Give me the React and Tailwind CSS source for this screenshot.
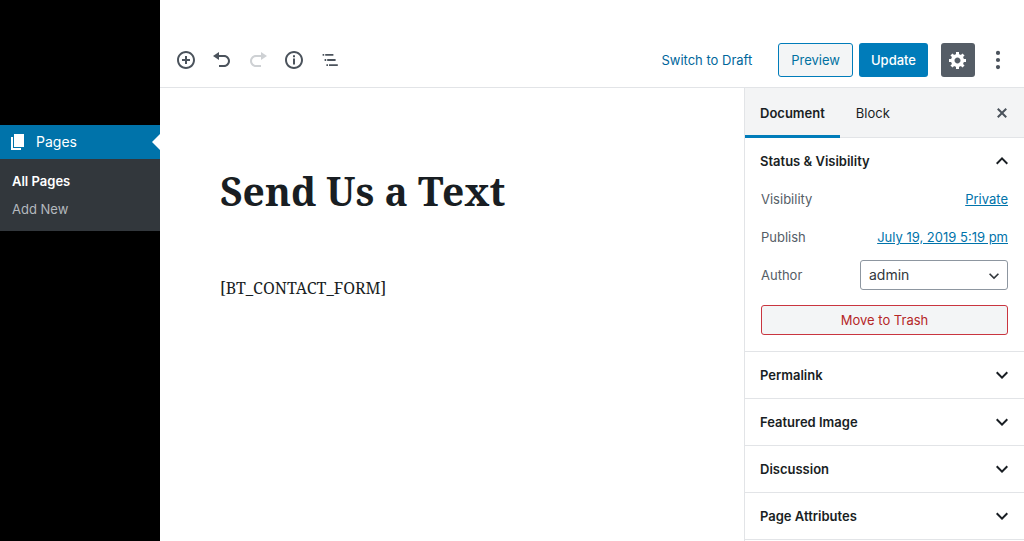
import React, { useState } from "react";

const PATHS = {
  insert:
    "M10 1c-5 0-9 4-9 9s4 9 9 9 9-4 9-9-4-9-9-9zm0 16c-3.9 0-7-3.1-7-7s3.1-7 7-7 7 3.1 7 7-3.1 7-7 7zm1-11H9v3H6v2h3v3h2v-3h3V9h-3V6z",
  undo: "M12 5H7V2L1 6l6 4V7h5c2.2 0 4 1.8 4 4s-1.8 4-4 4H7v2h5c3.3 0 6-2.7 6-6s-2.7-6-6-6z",
  redo: "M8 5h5V2l6 4-6 4V7H8c-2.2 0-4 1.8-4 4s1.8 4 4 4h5v2H8c-3.3 0-6-2.7-6-6s2.7-6 6-6z",
  info: "M10 1c-5 0-9 4-9 9s4 9 9 9 9-4 9-9-4-9-9-9zm0 16c-3.9 0-7-3.1-7-7s3.1-7 7-7 7 3.1 7 7-3.1 7-7 7zM9 5.2h2v2H9zM9 8.6h2v6H9z",
  outline:
    "M2.6 4h1.6v1.8H2.6zM5.2 4H13.4v1.8H5.2zM4.6 9.1h1.6v1.8H4.6zM7.2 9.1H15.6v1.8H7.2zM6.4 14.2h1.6v1.8H6.4zM9 14.2H17.8v1.8H9z",
  gear: "M18 12h-2.18c-.17.7-.44 1.35-.81 1.93l1.54 1.54-2.1 2.1-1.54-1.54c-.58.36-1.23.63-1.91.79V19H8v-2.18c-.68-.16-1.33-.43-1.91-.79l-1.54 1.54-2.12-2.12 1.54-1.54c-.36-.58-.63-1.23-.79-1.91H1V9.03h2.17c.16-.7.44-1.35.8-1.94L2.43 5.55l2.1-2.1 1.54 1.54c.58-.37 1.24-.64 1.93-.81V2h3v2.18c.68.16 1.33.43 1.91.79l1.54-1.54 2.12 2.12-1.54 1.54c.36.59.64 1.24.8 1.94H18V12zm-8.5 1.5c1.66 0 3-1.34 3-3s-1.34-3-3-3-3 1.34-3 3 1.34 3 3 3z",
  more: "M10 .8a2.1 2.1 0 1 0 0 4.2 2.1 2.1 0 0 0 0-4.2zM10 7.9a2.1 2.1 0 1 0 0 4.2 2.1 2.1 0 0 0 0-4.2zM10 15a2.1 2.1 0 1 0 0 4.2 2.1 2.1 0 0 0 0-4.2z",
  close:
    "M14.95 6.46L11.41 10l3.54 3.54-1.41 1.41L10 11.42l-3.53 3.53-1.42-1.42L8.58 10 5.05 6.47l1.42-1.42L10 8.58l3.54-3.53z",
  page: "M6 15V2h10v13H6zm-1 1h8v2H3V5h2v11z",
};

function Icon({ name, className = "size-5" }) {
  return (
    <svg viewBox="0 0 20 20" fill="currentColor" aria-hidden="true" className={className}>
      <path d={PATHS[name]} />
    </svg>
  );
}

function Chevron({ up = false, className = "size-6" }) {
  return (
    <svg viewBox="0 0 24 24" fill="currentColor" aria-hidden="true" className={className}>
      <path
        d={
          up
            ? "M12 8l-6 6 1.41 1.41L12 10.83l4.59 4.58L18 14z"
            : "M7.41 8.59L12 13.17l4.59-4.58L18 10l-6 6-6-6z"
        }
      />
    </svg>
  );
}

function ToolButton({ icon, label, disabled }) {
  return (
    <button
      type="button"
      aria-label={label}
      disabled={disabled}
      className="flex size-9 items-center justify-center text-[#4b535c] disabled:text-[#ced1d4]"
    >
      <Icon name={icon} />
    </button>
  );
}

function PanelToggle({ title, open, onClick }) {
  return (
    <h2>
      <button
        type="button"
        aria-expanded={open}
        onClick={onClick}
        className="flex h-[46px] w-full items-center justify-between pr-[10px] pl-[15px] text-left font-semibold text-[#191e23]"
      >
        {title}
        <Chevron up={open} />
      </button>
    </h2>
  );
}

function Panel({ title }) {
  const [open, setOpen] = useState(false);
  return (
    <section className="border-b border-[#e2e4e7]">
      <PanelToggle title={title} open={open} onClick={() => setOpen(!open)} />
    </section>
  );
}

function AdminMenu() {
  return (
    <nav aria-label="Main menu" className="w-40 shrink-0 bg-black pt-[125px] text-sm">
      <a
        href="#pages"
        className="relative flex h-[34px] items-center gap-2 bg-[#0073aa] pl-2 text-white"
      >
        <Icon name="page" />
        Pages
        <span className="absolute top-1/2 right-0 -translate-y-1/2 border-y-8 border-r-8 border-y-transparent border-r-white" />
      </a>
      <ul className="bg-[#32373c] px-3 py-2 text-[13px] leading-5">
        <li>
          <a href="#all" className="flex h-7 items-center font-semibold text-white">
            All Pages
          </a>
        </li>
        <li>
          <a href="#new" className="flex h-7 items-center text-[#b4b9be]">
            Add New
          </a>
        </li>
      </ul>
    </nav>
  );
}

function Header() {
  return (
    <header className="flex h-[88px] items-end justify-between border-b border-[#e2e4e7] pr-2 pb-[9px] pl-2">
      <div className="flex">
        <ToolButton icon="insert" label="Add block" />
        <ToolButton icon="undo" label="Undo" />
        <ToolButton icon="redo" label="Redo" disabled />
        <ToolButton icon="info" label="Content structure" />
        <ToolButton icon="outline" label="Block navigation" />
      </div>
      <div className="flex items-center text-[13px] leading-[22px]">
        <button type="button" className="mr-[26px] text-[#00669b]">
          Switch to Draft
        </button>
        <button
          type="button"
          className="mr-[6px] h-[34px] rounded-[3px] border border-[#007cba] bg-[#f3f5f6] px-3 text-[#0071a1]"
        >
          Preview
        </button>
        <button
          type="button"
          className="mr-[13px] h-[34px] rounded-[3px] bg-[#007cba] px-3 font-medium text-white"
        >
          Update
        </button>
        <button
          type="button"
          aria-label="Settings"
          className="mr-[5px] flex size-[34px] items-center justify-center rounded-[3px] bg-[#555d66] text-white"
        >
          <Icon name="gear" />
        </button>
        <ToolButton icon="more" label="More tools" />
      </div>
    </header>
  );
}

function SettingsSidebar() {
  const [open, setOpen] = useState(true);
  return (
    <aside className="w-[280px] shrink-0 border-l border-[#e2e4e7] text-[13px] leading-[22px]">
      <div className="flex h-[50px] items-stretch border-b border-[#e2e4e7] bg-[#f3f4f5] pr-3 text-[#191e23]">
        <button type="button" className="-mb-px border-b-3 border-[#007cba] px-[15px] pt-[2px] font-semibold">
          Document
        </button>
        <button type="button" className="px-4">
          Block
        </button>
        <button type="button" aria-label="Close settings" className="ml-auto text-[#4b535c]">
          <Icon name="close" />
        </button>
      </div>
      <section className="border-b border-[#e2e4e7]">
        <PanelToggle title="Status & Visibility" open={open} onClick={() => setOpen(!open)} />
        {open && (
          <div className="flex flex-col gap-2 px-4 pb-4 text-[#555d66]">
            <div className="flex h-[30px] items-center justify-between">
              <span>Visibility</span>
              <a href="#visibility" className="text-[#0073aa] underline">
                Private
              </a>
            </div>
            <div className="flex h-[30px] items-center justify-between">
              <span>Publish</span>
              <a href="#publish" className="text-[#0073aa] underline">
                July 19, 2019 5:19 pm
              </a>
            </div>
            <div className="flex h-[30px] items-center justify-between">
              <label htmlFor="author">Author</label>
              <div className="relative w-[148px]">
                <select
                  id="author"
                  className="block h-[30px] w-full appearance-none rounded-[3px] border border-[#8d96a0] bg-white pl-2 text-sm text-[#32373c]"
                >
                  <option>admin</option>
                </select>
                <Chevron className="pointer-events-none absolute top-[6px] right-1 size-5 text-[#32373c]" />
              </div>
            </div>
            <button
              type="button"
              className="mt-[7px] h-[30px] rounded-[3px] border border-[#c9353f] bg-[#f3f5f6] text-[#b52727]"
            >
              Move to Trash
            </button>
          </div>
        )}
      </section>
      <Panel title="Permalink" />
      <Panel title="Featured Image" />
      <Panel title="Discussion" />
      <Panel title="Page Attributes" />
    </aside>
  );
}

export default function App() {
  return (
    <div className="flex min-h-screen bg-white font-['Inter','Liberation_Sans',sans-serif]">
      <AdminMenu />
      <div className="flex min-w-0 flex-1 flex-col">
        <Header />
        <div className="flex flex-1">
          <main className="min-w-0 flex-1 pt-[78px] pl-[60px] font-['Noto_Serif','DejaVu_Serif_Condensed','DejaVu_Serif',serif] text-[#191e23]">
            <h1 className="text-[39px] leading-[50px] font-bold">Send Us a Text</h1>
            <p className="mt-[58px] text-base leading-7">[BT_CONTACT_FORM]</p>
          </main>
          <SettingsSidebar />
        </div>
      </div>
    </div>
  );
}
